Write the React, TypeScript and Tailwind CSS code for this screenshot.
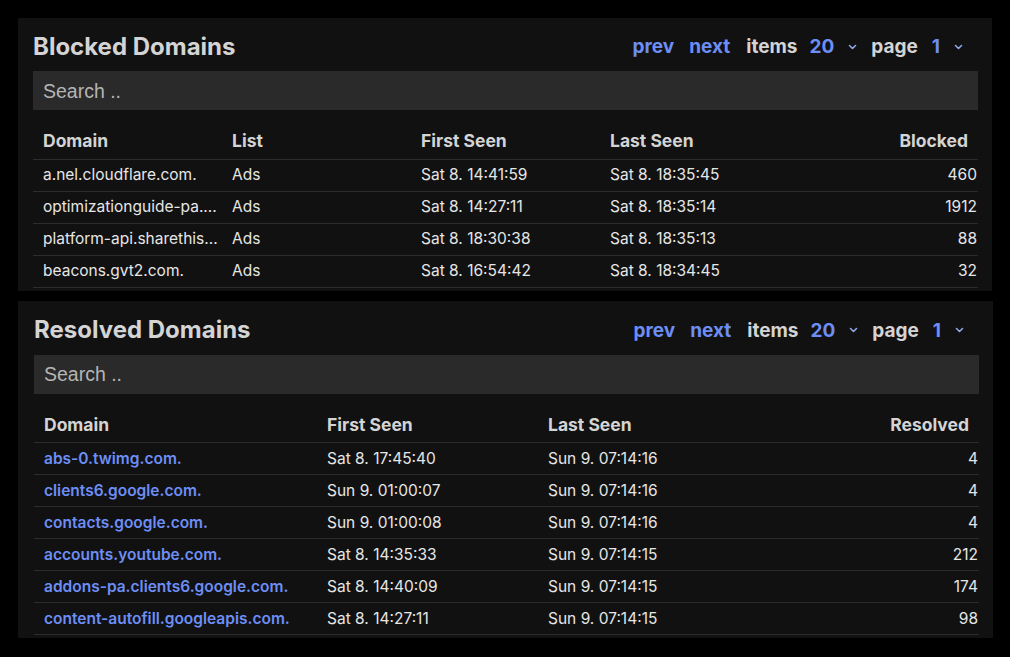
import React from 'react';

// ============ 数据 ============

interface BlockedRow {
    domain: string;
    list: string;
    firstSeen: string;
    lastSeen: string;
    count: number;
}

interface ResolvedRow {
    domain: string;
    firstSeen: string;
    lastSeen: string;
    count: number;
}

const BLOCKED: BlockedRow[] = [
    { domain: 'a.nel.cloudflare.com.', list: 'Ads', firstSeen: 'Sat 8. 14:41:59', lastSeen: 'Sat 8. 18:35:45', count: 460 },
    { domain: 'optimizationguide-pa....', list: 'Ads', firstSeen: 'Sat 8. 14:27:11', lastSeen: 'Sat 8. 18:35:14', count: 1912 },
    { domain: 'platform-api.sharethis...', list: 'Ads', firstSeen: 'Sat 8. 18:30:38', lastSeen: 'Sat 8. 18:35:13', count: 88 },
    { domain: 'beacons.gvt2.com.', list: 'Ads', firstSeen: 'Sat 8. 16:54:42', lastSeen: 'Sat 8. 18:34:45', count: 32 },
];

const RESOLVED: ResolvedRow[] = [
    { domain: 'abs-0.twimg.com.', firstSeen: 'Sat 8. 17:45:40', lastSeen: 'Sun 9. 07:14:16', count: 4 },
    { domain: 'clients6.google.com.', firstSeen: 'Sun 9. 01:00:07', lastSeen: 'Sun 9. 07:14:16', count: 4 },
    { domain: 'contacts.google.com.', firstSeen: 'Sun 9. 01:00:08', lastSeen: 'Sun 9. 07:14:16', count: 4 },
    { domain: 'accounts.youtube.com.', firstSeen: 'Sat 8. 14:35:33', lastSeen: 'Sun 9. 07:14:15', count: 212 },
    { domain: 'addons-pa.clients6.google.com.', firstSeen: 'Sat 8. 14:40:09', lastSeen: 'Sun 9. 07:14:15', count: 174 },
    { domain: 'content-autofill.googleapis.com.', firstSeen: 'Sat 8. 14:27:11', lastSeen: 'Sun 9. 07:14:15', count: 98 },
];

// ============ 组件 ============

const Chevron: React.FC = () => (
    <svg width="9" height="6" viewBox="0 0 9 6" className="text-[#8fa6e8]">
        <path d="M1.5 1.5 L4.5 4.5 L7.5 1.5" fill="none" stroke="currentColor" strokeWidth="1.6" strokeLinecap="round" strokeLinejoin="round" />
    </svg>
);

const Pager: React.FC = () => (
    <div className="flex items-center text-[19px] font-bold leading-none pr-[15px] pt-[1px]">
        <span className="text-[#6d8ef5]">prev</span>
        <span className="text-[#6d8ef5] ml-[15px]">next</span>
        <span className="text-[#d4d4d4] ml-[16px]">items</span>
        <span className="flex items-center gap-[14px] ml-[12px]">
            <span className="text-[#6d8ef5]">20</span>
            <Chevron />
        </span>
        <span className="text-[#d4d4d4] ml-[14px]">page</span>
        <span className="flex items-center gap-[14px] ml-[14px]">
            <span className="text-[#6d8ef5]">1</span>
            <Chevron />
        </span>
    </div>
);

interface PanelProps {
    title: string;
    children: React.ReactNode;
    // 第二个面板在截图里整体偏 1px
    className?: string;
}

const Panel: React.FC<PanelProps> = ({ title, children, className = 'pl-[15px] pt-[14px]' }) => (
    <div className={`bg-[#111111] pr-[14px] pb-[3px] ${className}`}>
        {/* 标题 + 分页 */}
        <div className="flex items-center justify-between h-[28px]">
            <h2 className="text-[24px] font-bold text-[#d4d4d4] leading-[28px] pt-[1px]">{title}</h2>
            <Pager />
        </div>

        {/* 搜索框 */}
        <input
            type="text"
            placeholder="Search .."
            className="mt-[11px] w-full h-[39px] bg-[#2a2a2a] px-[10px] pt-[1px] text-[19.5px] text-[#ddd] placeholder:text-[#b5b5b5] outline-none font-['Liberation_Sans',Arial,sans-serif]"
        />

        <div className="mt-[11px]">{children}</div>
    </div>
);

const th = 'h-[38px] px-[10px] pt-[3px] text-left text-[17.5px] font-bold text-[#d4d4d4] align-middle';
const td = 'h-[32px] pl-[10px] text-[15.5px] text-[#e6e6e6] align-middle whitespace-nowrap overflow-hidden';

export default function App() {
    return (
        <div className="min-h-[657px] bg-black p-[18px] font-['Inter',sans-serif]">
            <div className="flex flex-col gap-[10px]">
                <Panel title="Blocked Domains">
                    <table className="w-full table-fixed border-collapse">
                        <colgroup>
                            <col className="w-[189px]" />
                            <col className="w-[189px]" />
                            <col className="w-[189px]" />
                            <col className="w-[189px]" />
                            <col />
                        </colgroup>
                        <thead>
                            <tr className="border-b border-[#2c2c2c]">
                                <th className={th}>Domain</th>
                                <th className={th}>List</th>
                                <th className={th}>First Seen</th>
                                <th className={th}>Last Seen</th>
                                <th className={`${th} !text-right`}>Blocked</th>
                            </tr>
                        </thead>
                        <tbody>
                            {BLOCKED.map(row => (
                                <tr key={row.domain} className="border-b border-[#2c2c2c]">
                                    <td className={td}>{row.domain}</td>
                                    <td className={td}>{row.list}</td>
                                    <td className={td}>{row.firstSeen}</td>
                                    <td className={td}>{row.lastSeen}</td>
                                    <td className={`${td} text-right pr-[1px]`}>{row.count}</td>
                                </tr>
                            ))}
                        </tbody>
                    </table>
                </Panel>

                <Panel title="Resolved Domains" className="pl-[16px] pt-[15px] -mr-[1px]">
                    <table className="w-full table-fixed border-collapse">
                        <colgroup>
                            <col className="w-[283px]" />
                            <col className="w-[221px]" />
                            <col className="w-[221px]" />
                            <col />
                        </colgroup>
                        <thead>
                            <tr className="border-b border-[#2c2c2c]">
                                <th className={th}>Domain</th>
                                <th className={th}>First Seen</th>
                                <th className={th}>Last Seen</th>
                                <th className={`${th} !text-right`}>Resolved</th>
                            </tr>
                        </thead>
                        <tbody>
                            {RESOLVED.map(row => (
                                <tr key={row.domain} className="border-b border-[#2c2c2c]">
                                    <td className={`${td} !text-[#6d8ef5] font-semibold`}>{row.domain}</td>
                                    <td className={td}>{row.firstSeen}</td>
                                    <td className={td}>{row.lastSeen}</td>
                                    <td className={`${td} text-right pr-[1px]`}>{row.count}</td>
                                </tr>
                            ))}
                        </tbody>
                    </table>
                </Panel>
            </div>
        </div>
    );
}
